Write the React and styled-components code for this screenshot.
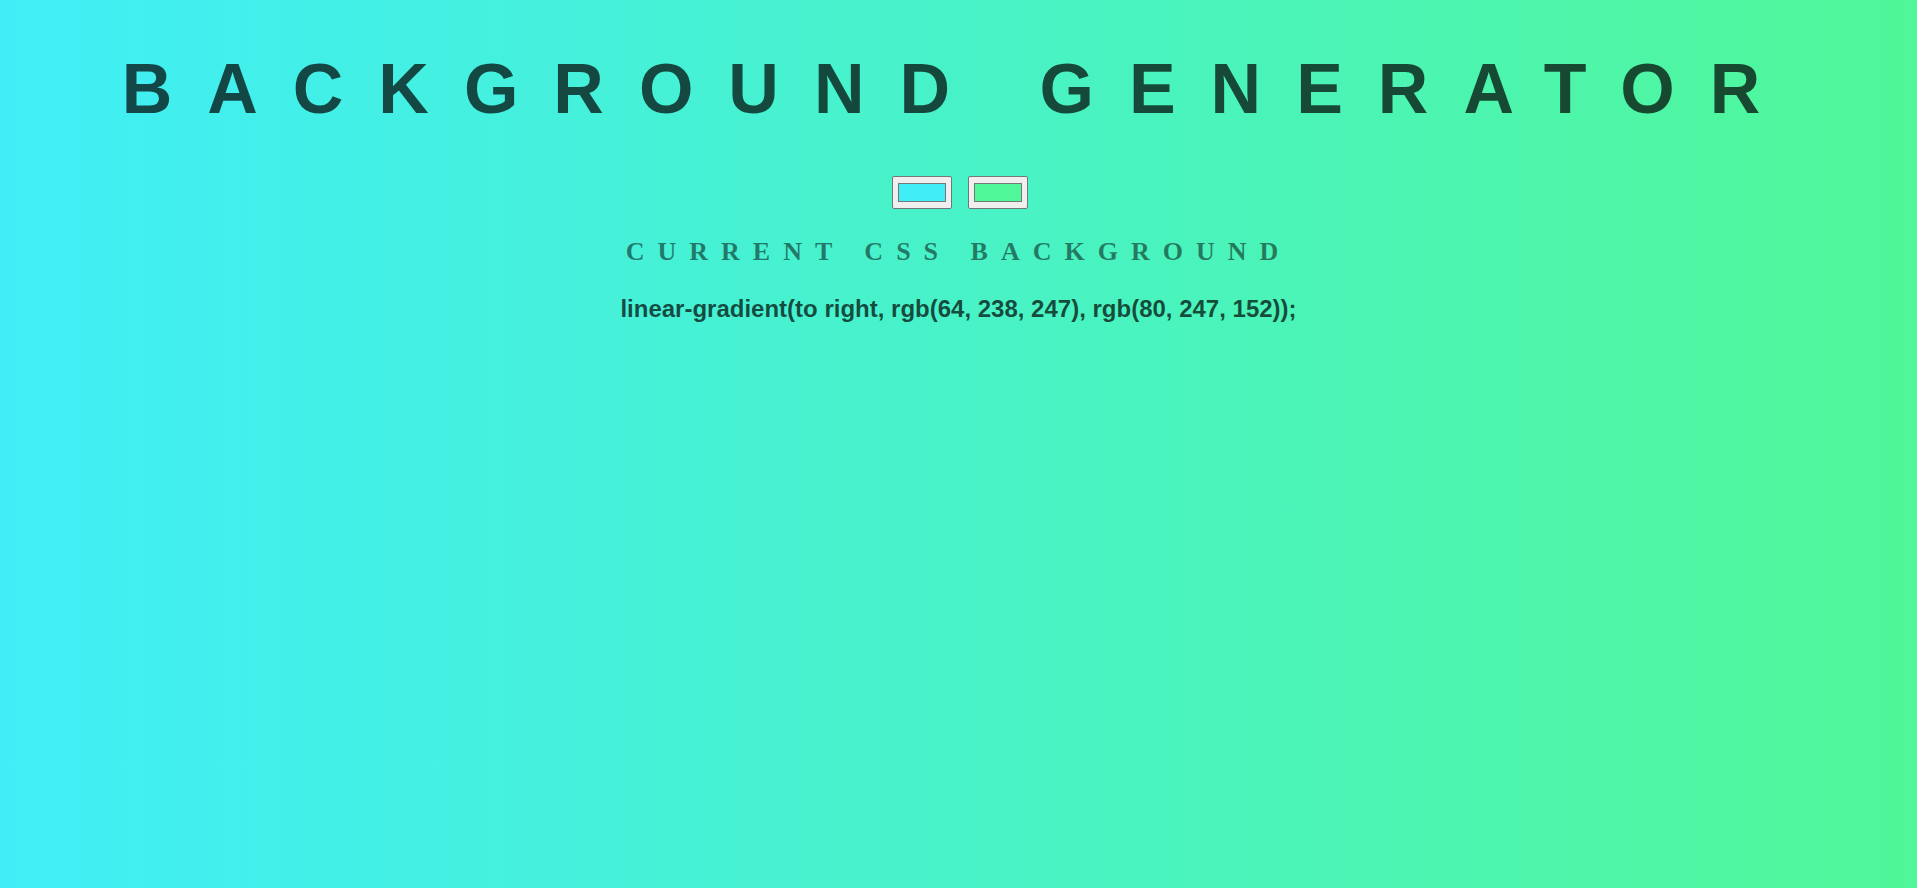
import React, { useState } from 'react';
import styled, { createGlobalStyle } from 'styled-components';

const GlobalStyle = createGlobalStyle`
  html {
    min-height: 100%;
  }

  body {
    margin: 8px;
    min-height: calc(100vh - 16px);
    font-family: 'Liberation Sans', Arial, sans-serif;
    text-align: center;
    background: ${(p) => p.$bg};
  }
`;

const Title = styled.h1`
  margin: 41px 0 47px;
  font-family: 'Liberation Sans', Arial, sans-serif;
  font-size: 70px;
  font-weight: 700;
  letter-spacing: 0.5em;
  text-transform: uppercase;
  color: rgba(0, 0, 0, 0.7);
`;

const Pickers = styled.div`
  display: flex;
  justify-content: center;
  gap: 16px;
  padding-left: 3px;
`;

const ColorInput = styled.input`
  -webkit-appearance: none;
  appearance: none;
  box-sizing: border-box;
  width: 60px;
  height: 33px;
  margin: 0;
  padding: 0;
  background: #efefef;
  border: 1px solid #767676;
  border-radius: 2px;
  cursor: pointer;

  &::-webkit-color-swatch-wrapper {
    padding: 6px 5px;
  }

  &::-webkit-color-swatch {
    border: 1px solid #777777;
    border-radius: 0;
  }
`;

const Subtitle = styled.h3`
  margin: 28px 0 26px;
  font-family: 'Liberation Serif', 'Times New Roman', serif;
  font-size: 26px;
  font-weight: 700;
  letter-spacing: 0.5em;
  text-transform: uppercase;
  color: rgba(0, 0, 0, 0.5);
`;

const CssText = styled.h3`
  margin: 28px 0 24px;
  font-family: 'Liberation Sans', Arial, sans-serif;
  font-size: 24px;
  font-weight: 700;
  color: rgba(0, 0, 0, 0.7);
`;

const hexToRgb = (hex) => {
  const n = parseInt(hex.slice(1), 16);
  return `rgb(${(n >> 16) & 255}, ${(n >> 8) & 255}, ${n & 255})`;
};

const App = () => {
  const [color1, setColor1] = useState('#40eef7');
  const [color2, setColor2] = useState('#50f798');

  const bg = `linear-gradient(to right, ${hexToRgb(color1)}, ${hexToRgb(color2)})`;

  return (
    <>
      <GlobalStyle $bg={bg} />
      <Title>Background Generator</Title>
      <Pickers>
        <ColorInput
          type='color'
          value={color1}
          onChange={(e) => setColor1(e.target.value)}
        />
        <ColorInput
          type='color'
          value={color2}
          onChange={(e) => setColor2(e.target.value)}
        />
      </Pickers>
      <Subtitle>Current CSS Background</Subtitle>
      <CssText>{bg};</CssText>
    </>
  );
};

export default App;
